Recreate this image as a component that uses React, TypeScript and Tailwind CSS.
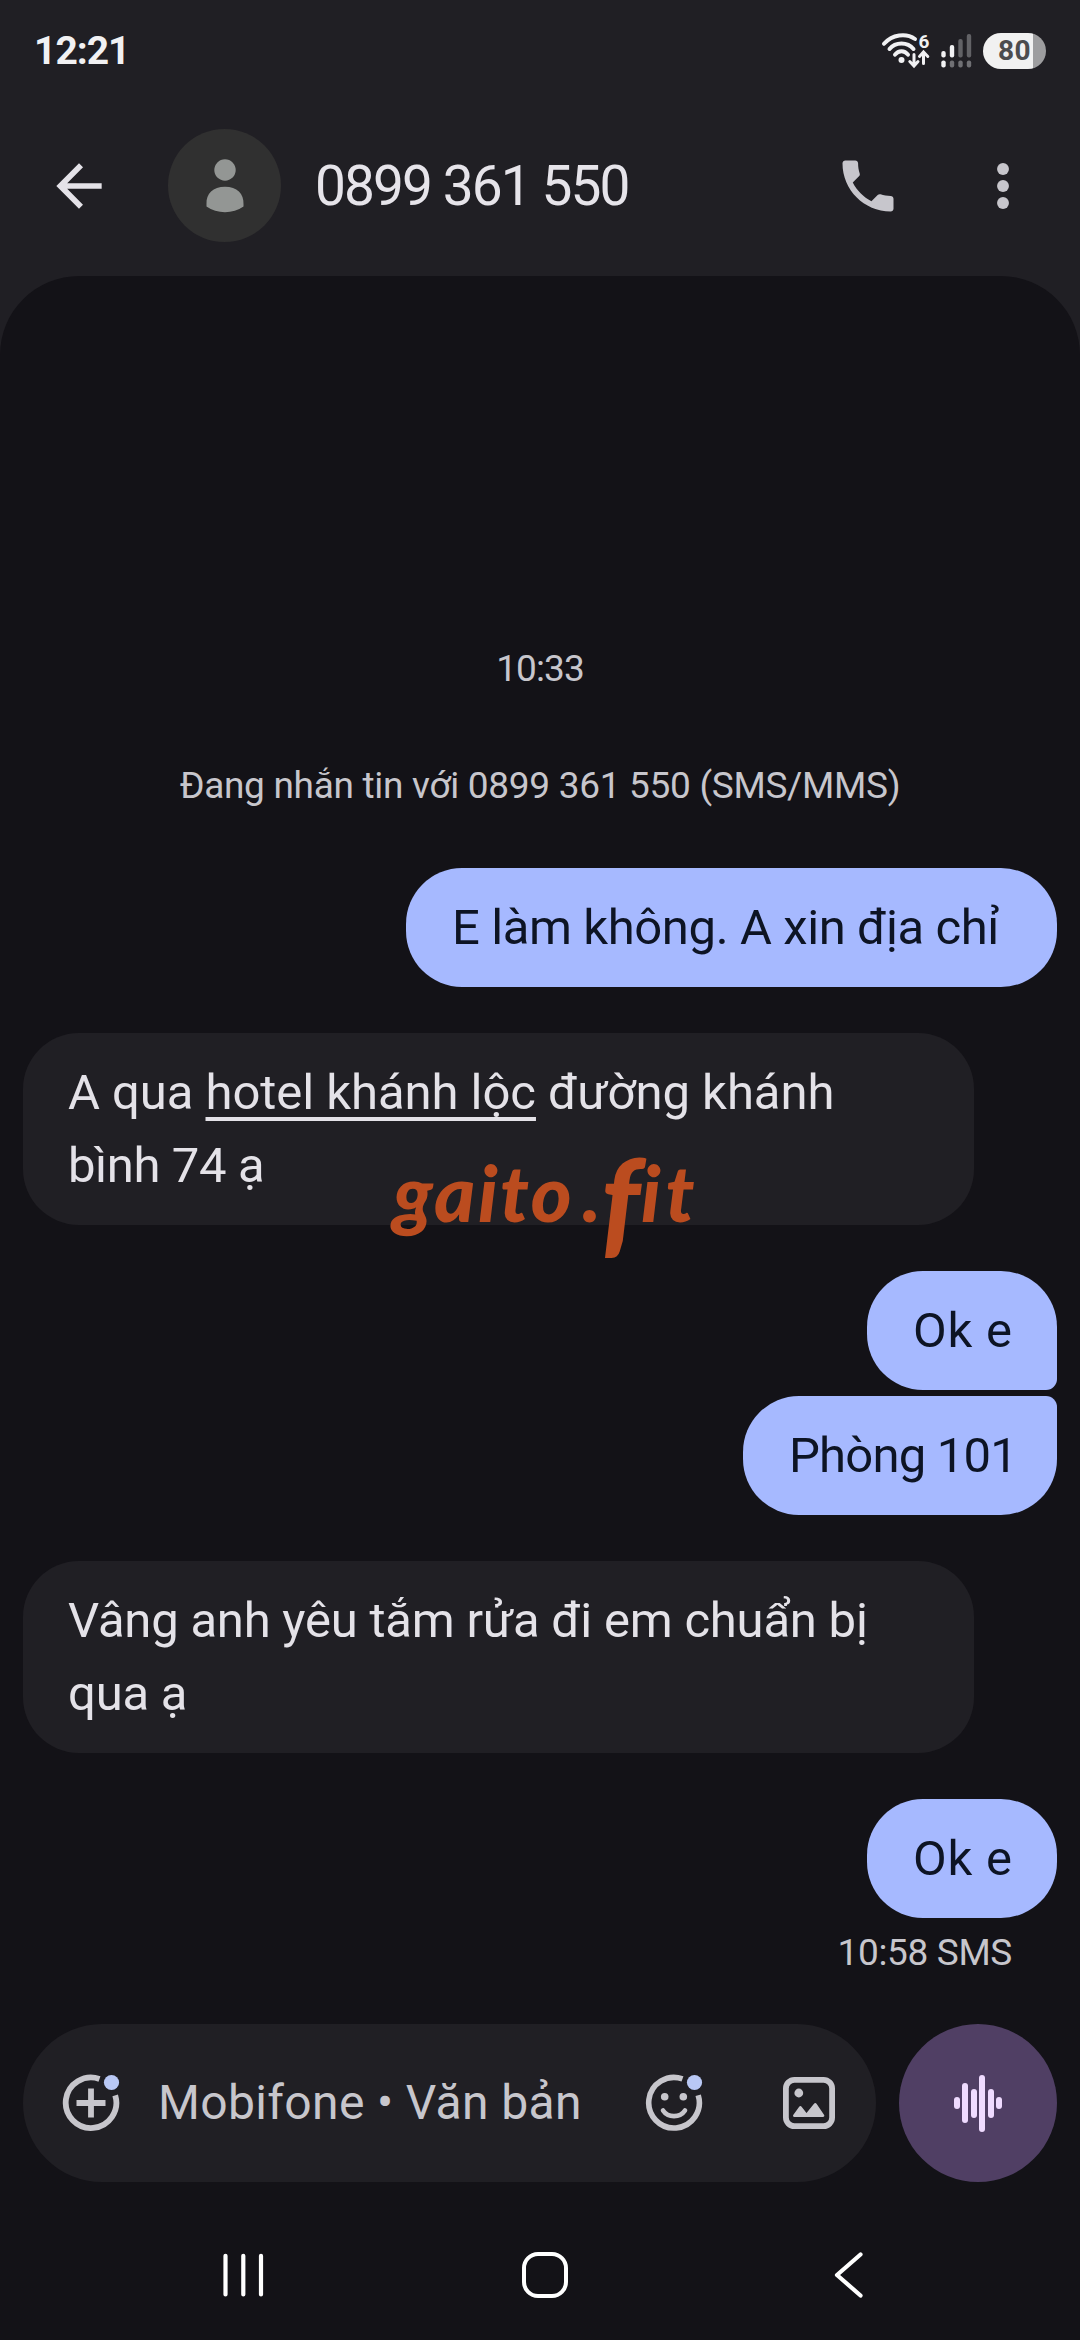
import clsx from "clsx";
import type { ReactNode } from "react";

interface BubbleProps {
  own?: boolean;
  className: string;
  children: ReactNode;
}

function Bubble({ own = false, className, children }: BubbleProps) {
  return (
    <div
      className={clsx(
        "py-[23px] text-[49px] leading-[73px] whitespace-nowrap",
        own ? "self-end bg-[#a6b9ff] pl-[46px] text-[#0d1424]" : "self-start bg-[#201f24] pl-[45px] text-[#e4e2e8]",
        className
      )}
    >
      {children}
    </div>
  );
}

const signalBars = [
  { x: 2.5, top: 18, on: true, dot: true },
  { x: 11, top: 12, on: true, dot: false },
  { x: 19.5, top: 6, on: false, dot: false },
  { x: 28, top: 1, on: false, dot: false },
];

function StatusBar() {
  return (
    <div className="flex h-[102px] items-center pl-[34px] pr-[34px] text-[#f1f1f3]">
      <span className="text-[39px] font-bold leading-none tracking-[-1px]">12:21</span>
      <svg className="ml-auto overflow-visible" width="48" height="36" viewBox="0 0 48 36" fill="none" stroke="#f1f1f3" strokeLinecap="round">
        <path d="M2 10.8C10 1.5 24 -0.5 33 6" strokeWidth="4" />
        <path d="M7.5 16C13.5 8.8 25.5 8.8 31.5 16" strokeWidth="4" />
        <path d="M13 21.6C16.5 17 22.5 17 26 21.6" strokeWidth="4" />
        <circle cx="19.5" cy="27" r="3" fill="#f1f1f3" stroke="none" />
        <path d="M32 21.5V32M27.8 28.5L32 33L36 28.5" strokeWidth="3" />
        <path d="M41.5 30.5V20M37.5 23.5L41.5 19L45.8 23.5" strokeWidth="3" />
        <text x="36.5" y="15" fill="#f1f1f3" stroke="none" fontSize="19" fontWeight="700">6</text>
      </svg>
      <svg className="ml-[11px]" width="31" height="36" viewBox="0 0 31 36">
        {signalBars.map((bar) => (
          <g key={bar.x}>
            <rect x={bar.x - 2.2} y={bar.top} width="4.4" height={24.5 - bar.top} rx="2" fill={bar.on ? "#f1f1f3" : "#626266"} />
            <rect x={bar.x - 2.2} y="27.5" width="4.4" height="7" rx="2" fill={bar.dot ? "#f1f1f3" : "#707074"} />
          </g>
        ))}
      </svg>
      <div className="ml-[11px] flex h-[36px] w-[63px] items-center overflow-hidden rounded-full bg-[linear-gradient(90deg,#f1f1f1_80%,#9d9d9f_80%)] pl-[15px] text-[28px] font-bold tracking-[0.5px] text-[#4c4c4e]">
        80
      </div>
    </div>
  );
}

function Header() {
  return (
    <div className="flex h-[174px] items-center pb-[7px] pl-[45px]">
      <svg width="68" height="68" viewBox="0 0 24 24" fill="#e4e2e8">
        <path d="M20 11H7.83l5.59-5.59L12 4l-8 8 8 8 1.41-1.41L7.83 13H20v-2z" />
      </svg>
      <div className="ml-[55px] flex h-[113px] w-[113px] items-center justify-center rounded-full bg-[#303030]">
        <svg width="38" height="56" viewBox="0 0 38 56" fill="#939694">
          <circle cx="19" cy="12" r="10.7" />
          <path d="M0.5 46C0 36 7 28.8 19 28.8S38 36 37.5 46V48.5C27 56 11 56 0.5 48.5Z" />
        </svg>
      </div>
      <h1 className="ml-[34px] w-[490px] pt-[2px] text-[55px] tracking-[-1.9px] text-[#e6e4ea]">0899 361 550</h1>
      <svg className="ml-[29px]" width="68" height="68" viewBox="0 0 24 24" fill="#c7c6cc">
        <path d="M6.62 10.79c1.44 2.83 3.76 5.14 6.59 6.59l2.2-2.2c.27-.27.67-.36 1.02-.24 1.12.37 2.33.57 3.57.57.55 0 1 .45 1 1V20c0 .55-.45 1-1 1-9.39 0-17-7.61-17-17 0-.55.45-1 1-1h3.5c.55 0 1 .45 1 1 0 1.25.2 2.45.57 3.57.11.35.03.74-.25 1.02l-2.2 2.2z" />
      </svg>
      <svg className="ml-[67px]" width="68" height="68" viewBox="0 0 24 24" fill="#c7c6cc">
        <circle cx="12" cy="6" r="2.1" />
        <circle cx="12" cy="12" r="2.1" />
        <circle cx="12" cy="18" r="2.1" />
      </svg>
    </div>
  );
}

function Composer() {
  return (
    <div className="mt-[49px] flex gap-[23px]">
      <div className="flex h-[158px] w-[853px] items-center rounded-full bg-[#201f24] pl-[38px]">
        <svg width="60" height="60" viewBox="0 0 60 60" fill="none" stroke="#c7c6cc" strokeWidth="5.8">
          <path d="M38.5 5.9A25.3 25.3 0 1 0 54.2 22.3" />
          <path d="M30 15.5V44.5M15.5 30H44.5" />
          <circle cx="50.5" cy="9.5" r="7.6" fill="#b9c8f5" stroke="none" />
        </svg>
        <span className="ml-[37px] w-[460px] text-[48px] whitespace-nowrap tracking-[0.35px] text-[#c7c6cc]">
          Mobifone • Văn bản
        </span>
        <svg className="ml-[26px]" width="60" height="60" viewBox="0 0 60 60" fill="none" stroke="#c7c6cc" strokeWidth="5.6">
          <path d="M38.5 5.9A25.3 25.3 0 1 0 54.2 22.3" />
          <circle cx="20.7" cy="23.7" r="3.8" fill="#c7c6cc" stroke="none" />
          <circle cx="39.3" cy="23.7" r="3.8" fill="#c7c6cc" stroke="none" />
          <path d="M19 37.5C24 45 36 45 41 37.5" strokeWidth="4.6" strokeLinecap="round" />
          <circle cx="50.5" cy="9.5" r="7.6" fill="#b9c8f5" stroke="none" />
        </svg>
        <svg className="ml-[79px]" width="52" height="52" viewBox="0 0 52 52" fill="#c7c6cc">
          <rect x="2.9" y="2.9" width="46.2" height="46.2" rx="8.5" fill="none" stroke="#c7c6cc" strokeWidth="5.8" />
          <circle cx="15.8" cy="16" r="4.4" />
          <path d="M11.5 40C10 40 9.6 38.8 10.4 37.8L16 30Q17.4 28.2 18.8 30L23.5 36L30.8 27Q32.3 25.2 33.7 27L41 37.8C41.8 38.8 41.2 40 39.8 40Z" />
        </svg>
      </div>
      <div className="flex h-[158px] w-[158px] items-center justify-center gap-[2.6px] rounded-full bg-[#503f64]">
        <div className="h-[12px] w-[6px] rounded-full bg-[#efdbff]" />
        <div className="h-[40px] w-[6px] rounded-full bg-[#efdbff]" />
        <div className="h-[29px] w-[6px] rounded-full bg-[#efdbff]" />
        <div className="h-[57px] w-[6px] rounded-full bg-[#efdbff]" />
        <div className="h-[29px] w-[6px] rounded-full bg-[#efdbff]" />
        <div className="h-[12px] w-[6px] rounded-full bg-[#efdbff]" />
      </div>
    </div>
  );
}

function NavBar() {
  return (
    <div className="flex h-[158px] items-start pl-[223px] pt-[70px]">
      <svg width="41" height="46" viewBox="0 0 41 46" stroke="#fff" strokeWidth="4.2" strokeLinecap="round">
        <path d="M2.5 3.8V42.4M20.3 3.8V42.4M38 3.8V42.4" />
      </svg>
      <div className="ml-[258px] h-[46px] w-[46px] rounded-[16px] border-4 border-white" />
      <svg className="ml-[264px]" width="32" height="46" viewBox="0 0 32 46" fill="none" stroke="#fff" strokeWidth="4.2" strokeLinecap="round">
        <path d="M28.5 2.5L5 23L28.5 43.5" strokeLinejoin="round" />
      </svg>
    </div>
  );
}

export default function App() {
  return (
    <div className="h-[2340px] w-[1080px] overflow-hidden bg-[#201f24] font-['Roboto','Noto_Sans',sans-serif]">
      <StatusBar />
      <Header />
      <div className="relative flex h-[2064px] flex-col rounded-t-[79px] bg-[#131217]">
        <div className="flex flex-col px-[23px] pt-[371px]">
          <p className="self-center text-[37px] leading-[44px] tracking-[-0.9px] text-[#c7c6cc]">10:33</p>
          <p className="mt-[73px] self-center text-[37px] leading-[44px] tracking-[-0.3px] whitespace-nowrap text-[#c7c6cc]">
            Đang nhắn tin với 0899 361 550 (SMS/MMS)
          </p>
          <Bubble own className="mt-[60px] w-[651px] rounded-[56px] tracking-[-0.4px]">
            E làm không. A xin địa chỉ
          </Bubble>
          <Bubble className="mt-[46px] w-[951px] rounded-[56px] tracking-[-0.05px]">
            A qua <span className="underline decoration-4 underline-offset-[8px] [text-decoration-skip-ink:none]">hotel khánh lộc</span> đường khánh
            <br />
            <span className="tracking-[-0.4px]">bình 74 ạ</span>
          </Bubble>
          <Bubble own className="mt-[46px] w-[190px] rounded-[56px] rounded-br-[11px] tracking-[0.8px]">
            Ok e
          </Bubble>
          <Bubble own className="mt-[6px] w-[314px] rounded-[56px] rounded-tr-[11px] tracking-[-0.8px]">
            Phòng 101
          </Bubble>
          <Bubble className="mt-[46px] w-[951px] rounded-[56px] tracking-[-0.22px]">
            Vâng anh yêu tắm rửa đi em chuẩn bị
            <br />
            qua ạ
          </Bubble>
          <Bubble own className="mt-[46px] w-[190px] rounded-[56px] tracking-[0.8px]">
            Ok e
          </Bubble>
          <p className="mt-[13px] mr-[45px] self-end text-[37px] leading-[44px] tracking-[-0.35px] text-[#c7c6cc]">10:58 SMS</p>
          <Composer />
        </div>
        <NavBar />
        <div className="absolute left-[393px] top-[847px] flex items-baseline font-['Lato',sans-serif] text-[78px] leading-[110px] font-black italic text-[#bb4c1f]">
          <span className="tracking-[2.6px]">gaito</span>
          <span className="ml-[8px]">.</span>
          <span className="translate-y-[22px] text-[116px]">f</span>
          <span className="ml-[1px] tracking-[5px]">it</span>
        </div>
      </div>
    </div>
  );
}
